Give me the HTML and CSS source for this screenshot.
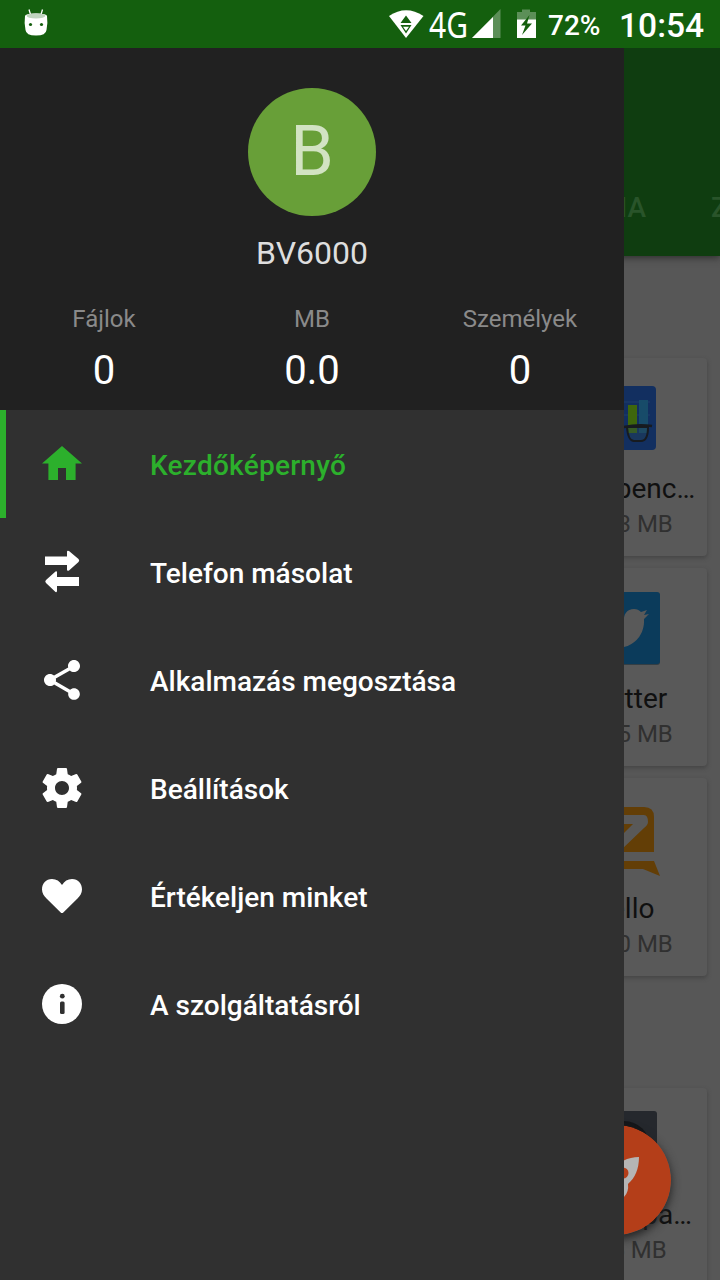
FILE: index.html
```
<!DOCTYPE html>
<html lang="hu">
<head>
  <meta charset="utf-8">
  <title>BV6000</title>
  <link rel="stylesheet" href="styles.css">
</head>
<body>
<div class="screen">
  <div class="status-bar">
    <svg class="status-android" width="24" height="28" viewBox="0 0 24 28">
      <path d="M5 1.5l1.5 5M18.500 1.500l-1.500 5" stroke="#fff" stroke-width="1.300" fill="none"/>
      <path d="M1 8Q1 5.500 12 5.500T23 8Q24 15 22.500 22Q22 27.500 12 27.500T1.500 22Q0 15 1 8z" fill="#fff"/>
      <ellipse cx="12" cy="7.800" rx="9.500" ry="2.600" fill="#c0d5bf"/>
      <circle cx="6.500" cy="16.500" r="1.600" fill="#145f0e"/>
      <circle cx="17.500" cy="16.500" r="1.600" fill="#145f0e"/>
    </svg>
    <svg class="status-icons" width="152" height="48" viewBox="0 0 152 48">
      <path d="M1 16Q18 4.500 35.500 16L18 38z" fill="#fff"/>
      <path d="M18 15.500l5.500 7.500h-11zM12.500 25h11L18 33.500z" fill="#145f0e"/>
      <path d="M15 26.800h6L18 31z" fill="#fff"/>
      <text class="network" x="41" y="38" textLength="39" lengthAdjust="spacingAndGlyphs">4G</text>
      <path d="M112.500 9v29H84z" fill="#5c8f58"/>
      <path d="M105 17v21H84z" fill="#fff"/>
      <path d="M129 12h5V9.500h8V12h6v8h-19z" fill="#5c8f58"/>
      <path d="M129 19.500h19V38h-19z" fill="#fff"/>
      <path d="M141.500 15l-8.500 10.500h4.500L134 35l10-11.500h-5z" fill="#145f0e"/>
    </svg>
    <span class="battery">72%</span>
    <span class="clock">10:54</span>
  </div>

  <div class="content">
    <div class="toolbar">
      <span class="tab">MÉDIA</span>
      <span class="tab tab-next">ZENE</span>
    </div>
    <div class="apps">
      <div class="card">
        <svg class="app-icon" width="96" height="96" viewBox="0 0 96 96">
          <rect x="16" y="16" width="64" height="64" rx="4" fill="#122f60"/>
          <path d="M20 32h54M20 45h54" stroke="#1f3f6a" stroke-width="1"/>
          <rect x="52" y="35" width="9" height="28" fill="#3e660c"/>
          <rect x="63" y="30" width="9" height="33" fill="#174b69"/>
          <path d="M51 57h21q0 14-7 14h-7q-6 0-7-14zM45 57H24q0 14 7 14h7q6 0 7-14z" fill="#284858" fill-opacity=".35" stroke="#171b20" stroke-width="2"/>
          <path d="M20 56q14-2 28 1 14-3 28-1" fill="none" stroke="#171b20" stroke-width="2.600"/>
        </svg>
        <div class="app-name">Geekbenc…</div>
        <div class="app-size">45.3 MB</div>
      </div>
      <div class="card">
        <svg class="app-icon" width="96" height="96" viewBox="0 0 96 96">
          <rect x="12" y="13" width="72" height="72" rx="3" fill="#343e44"/>
          <rect x="12" y="12" width="72" height="72" rx="3" fill="#0b3b5b"/>
          <path d="M24 31q10 12 24 12c-1-9 3-14 10-14 3 0 5 1 7 3l6-2-3 5 5-1-5 5c1 16-10 26-20 28-8 1-20 0-24-5 7 0 11-2 14-5-5 0-9-3-10-7h4c-6-2-9-6-9-12" fill="#595959"/>
        </svg>
        <div class="app-name">Twitter</div>
        <div class="app-size">35.5 MB</div>
      </div>
      <div class="card">
        <svg class="app-icon" width="96" height="96" viewBox="0 0 96 96">
          <path d="M18 27q0-10 10-10h40q10 0 10 10v35H18z" fill="#633e06"/>
          <path d="M28 25h40q4 0 4 7 0 3-4 6L44 61H30l27-27H28z" fill="#595959"/>
          <path d="M18 71h60l6 15-17-7H18z" fill="#633e06"/>
        </svg>
        <div class="app-name">Zello</div>
        <div class="app-size">13.0 MB</div>
      </div>
      <div class="card card-section">
        <svg class="app-icon" width="96" height="96" viewBox="0 0 96 96">
          <rect x="15" y="11" width="66" height="66" rx="3" fill="#25282d"/>
          <circle cx="48" cy="47" r="26" fill="#141619"/>
        </svg>
        <div class="app-name">Sound pa…</div>
        <div class="app-size">105 MB</div>
      </div>
    </div>
    <svg class="fab" width="110" height="110" viewBox="0 0 110 110">
      <circle cx="55" cy="55" r="55" fill="#b43e19"/>
      <path d="M78 32C67 32 57 37 49 47l-5 7-10 2-7 12h14l8 8v10l14-14q5-5 4-13C74 53 78 44 78 32z" fill="#b5b5b5"/>
      <circle cx="62" cy="48" r="5.500" fill="#b43e19"/>
    </svg>
  </div>

  <div class="drawer">
    <div class="profile">
      <div class="avatar">B</div>
      <div class="device-name">BV6000</div>
      <div class="stats">
        <div class="stat">
          <div class="stat-label">Fájlok</div>
          <div class="stat-value">0</div>
        </div>
        <div class="stat">
          <div class="stat-label">MB</div>
          <div class="stat-value">0.0</div>
        </div>
        <div class="stat">
          <div class="stat-label">Személyek</div>
          <div class="stat-value">0</div>
        </div>
      </div>
    </div>
    <div class="menu">
      <div class="menu-item active">
        <svg class="menu-icon" width="48" height="48" viewBox="0 0 24 24">
          <path d="M10 20v-6h4v6h4.800v-8.300H22L12 3 2 11.700h3.200V20z"/>
        </svg>
        <span>Kezdőképernyő</span>
      </div>
      <div class="menu-item">
        <svg class="menu-icon" width="48" height="48" viewBox="0 1 48 48">
          <path d="M7 9.500h22V5q0-2 2-1l9.500 8q1.500 1.500 0 3L31 23.500q-2 1-2-1V18H7zM41 30v9H19v5q0 1.500-1.500 1L8 36q-1.500-1.500 0-3l9.500-8.500q1.500-1 1.500 1V30z"/>
        </svg>
        <span>Telefon másolat</span>
      </div>
      <div class="menu-item">
        <svg class="menu-icon" width="48" height="48" viewBox="0 0 24 24">
          <path d="M18 16.080c-.760 0-1.440.300-1.960.770L8.910 12.700c.050-.230.090-.460.090-.700s-.040-.470-.090-.700l7.050-4.110c.540.500 1.250.810 2.040.810 1.660 0 3-1.340 3-3s-1.340-3-3-3-3 1.340-3 3c0 .240.040.470.090.700L8.040 9.810C7.500 9.310 6.790 9 6 9c-1.660 0-3 1.340-3 3s1.340 3 3 3c.790 0 1.500-.310 2.040-.810l7.120 4.160c-.050.210-.080.430-.080.650 0 1.610 1.310 2.920 2.920 2.920s2.920-1.310 2.920-2.920-1.310-2.920-2.920-2.920z"/>
        </svg>
        <span>Alkalmazás megosztása</span>
      </div>
      <div class="menu-item">
        <svg class="menu-icon" width="48" height="48" viewBox="0 0 24 24">
          <path d="M19.430 12.980c.040-.320.070-.640.070-.980s-.030-.660-.070-.980l2.110-1.650c.190-.150.240-.420.120-.640l-2-3.460c-.120-.220-.390-.300-.610-.220l-2.490 1c-.520-.400-1.080-.730-1.690-.980l-.380-2.650C14.460 2.180 14.250 2 14 2h-4c-.250 0-.460.180-.490.420l-.380 2.650c-.610.250-1.170.590-1.690.980l-2.490-1c-.230-.090-.490 0-.610.220l-2 3.460c-.130.220-.070.490.120.640l2.110 1.650c-.040.320-.070.650-.070.980s.030.660.070.980l-2.110 1.650c-.190.150-.240.420-.120.640l2 3.460c.120.220.390.300.610.220l2.490-1c.520.400 1.080.730 1.690.980l.380 2.650c.030.240.240.420.490.420h4c.250 0 .460-.180.490-.420l.380-2.650c.610-.250 1.170-.590 1.690-.980l2.490 1c.230.090.490 0 .610-.220l2-3.460c.120-.220.070-.490-.120-.640l-2.110-1.650zM12 15.500c-1.930 0-3.500-1.570-3.500-3.500s1.570-3.500 3.500-3.500 3.500 1.570 3.500 3.500-1.570 3.500-3.500 3.500z"/>
        </svg>
        <span>Beállítások</span>
      </div>
      <div class="menu-item">
        <svg class="menu-icon" width="48" height="48" viewBox="0 0 48 48">
          <path d="M24 41q-.7 0-1.300-.6L8.500 26.500C6 24 4 21 4 17.500 4 11.500 8 7 14 7c4.500 0 7.500 2 10 6 2.500-4 5.500-6 10-6 6 0 10 4.500 10 10.500 0 3.500-2 6.500-4.500 9L25.300 40.400q-.6.600-1.300.600z"/>
        </svg>
        <span>Értékeljen minket</span>
      </div>
      <div class="menu-item">
        <svg class="menu-icon" width="48" height="48" viewBox="0 0 48 48">
          <circle cx="24" cy="24" r="20"/>
          <circle cx="24.300" cy="16.200" r="2.400" fill="#303030"/>
          <rect x="22" y="21.500" width="4.600" height="12.500" rx="1.500" fill="#303030"/>
        </svg>
        <span>A szolgáltatásról</span>
      </div>
    </div>
  </div>
</div>
</body>
</html>
```
FILE: styles.css
```
html, body {
  margin: 0;
  padding: 0;
  box-sizing: border-box;
}

body {
  font-family: Roboto, "Liberation Sans", sans-serif;
}

.screen {
  display: flex;
  flex-direction: column;
  position: relative;
  width: 720px;
  height: 1280px;
  overflow: hidden;
  background-color: #575757;
}

.status-bar {
  display: flex;
  align-items: center;
  flex: 0 0 48px;
  color: #fff;
  background-color: #145f0e;
  font-weight: 500;
}

.status-android {
  margin: 0 auto 5px 24px;
}

.status-icons {
  margin-right: 8px;
}

.network {
  font-family: "Noto Sans", sans-serif;
  font-size: 36px;
  font-weight: 400;
  fill: #fff;
}

.battery {
  width: 71px;
  font-size: 28px;
  padding-top: 2px;
}

.clock {
  width: 101px;
  font-size: 33.6px;
  padding-top: 2px;
}

.content {
  display: flex;
  flex-direction: column;
  flex: 1;
  position: relative;
  overflow: hidden;
}

.toolbar {
  display: flex;
  justify-content: flex-end;
  box-sizing: border-box;
  flex: 0 0 208px;
  padding-top: 143px;
  color: #29542a;
  background-color: #0f3d10;
  box-shadow: 0 2px 7px #303030;
  font-size: 28px;
  font-weight: 500;
}

.tab-next {
  width: 9px;
  margin-left: 65px;
}

.apps {
  display: flex;
  flex-direction: column;
  align-items: flex-end;
  gap: 12px;
  padding: 102px 13px 0 0;
}

.card {
  display: flex;
  flex-direction: column;
  align-items: center;
  box-sizing: border-box;
  width: 166px;
  height: 198px;
  flex-shrink: 0;
  padding-top: 12px;
  border-radius: 4px;
  background-color: #595959;
  box-shadow: 0 2px 4px #444;
}

.card-section {
  margin-top: 100px;
}

.app-name {
  color: #101010;
  font-size: 28px;
  line-height: 33px;
  margin-top: 6px;
}

.app-size {
  color: #303030;
  font-size: 24px;
  line-height: 28px;
  margin-top: 5px;
  padding-left: 9px;
}

.card-section .app-name {
  margin-top: 2px;
}

.card-section .app-size {
  padding-left: 3px;
}

.fab {
  position: absolute;
  right: 49px;
  bottom: 45px;
  border-radius: 50%;
  box-shadow: 0 4px 10px #222;
}

.drawer {
  position: absolute;
  top: 48px;
  bottom: 0;
  left: 0;
  width: 624px;
  background-color: #303030;
}

.profile {
  display: flex;
  flex-direction: column;
  align-items: center;
  box-sizing: border-box;
  height: 362px;
  padding-top: 40px;
  background-color: #212121;
}

.avatar {
  width: 128px;
  height: 128px;
  border-radius: 50%;
  color: #d2e3c3;
  background-color: #689f38;
  font-size: 70px;
  line-height: 126px;
  text-align: center;
}

.device-name {
  margin-top: 18px;
  color: #dedede;
  font-size: 32px;
  line-height: 38px;
}

.stats {
  display: flex;
  width: 100%;
  margin-top: 33px;
  text-align: center;
}

.stat {
  flex: 1;
}

.stat-label {
  color: #8a8a8a;
  font-size: 24px;
  line-height: 28px;
}

.stat-value {
  margin-top: 14px;
  color: #fff;
  font-size: 40px;
  line-height: 47px;
}

.menu-item {
  display: flex;
  align-items: center;
  box-sizing: border-box;
  height: 108px;
  padding: 0 0 0 38px;
  color: #fff;
  font-size: 28px;
  font-weight: 500;
}

.menu-item.active {
  padding-left: 32px;
  border-left: 6px solid #2cb02c;
  color: #2cb02c;
  letter-spacing: .25px;
}

.menu-icon {
  margin-right: 64px;
  fill: currentColor;
}

.menu-item span {
  padding-top: 3px;
}
```
